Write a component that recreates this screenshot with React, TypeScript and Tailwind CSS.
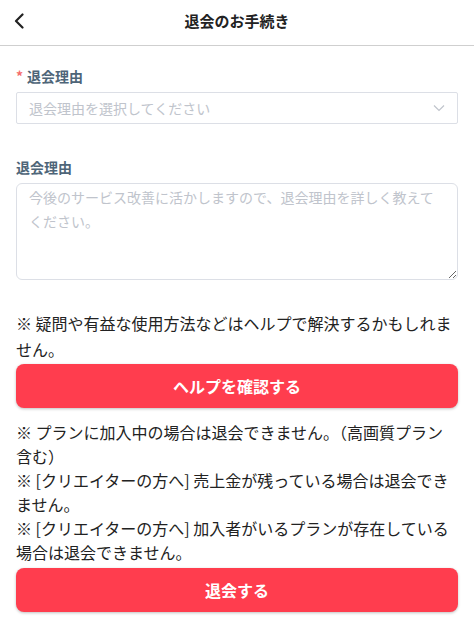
import React from "react";

const font = { fontFamily: '"Noto Sans CJK JP", "Noto Sans", sans-serif' };

export default function App() {
  return (
    <div className="w-[474px] min-h-[624px] bg-white text-[#222]" style={font}>
      <header className="relative h-[46px] border-b border-[#cfcfcf] flex items-center justify-center">
        <button className="absolute left-[12px] top-[12px] w-[14px] h-[18px] flex items-center justify-center">
          <svg width="10" height="16" viewBox="0 0 10 16" fill="none">
            <path d="M8.5 1.5 L2 8 L8.5 14.5" stroke="#222" strokeWidth="2.2" strokeLinecap="round" strokeLinejoin="round" />
          </svg>
        </button>
        <h1 className="text-[15px] font-bold leading-none -mt-[5px]">退会のお手続き</h1>
      </header>

      <main className="px-4 pt-[19px]">
        <label className="block text-[14px] font-bold leading-[22px] text-[#4e6578] mb-[5px]">
          <span className="text-[#f56c6c] mr-[4px]">*</span>退会理由
        </label>
        <div className="h-[32px] border border-[#dcdfe6] rounded-[2px] flex items-center justify-between pl-[12px] pr-[12px]">
          <span className="text-[14px] text-[#c0c4cc]">退会理由を選択してください</span>
          <svg width="12" height="8" viewBox="0 0 12 8" fill="none">
            <path d="M1 1.5 L6 6.5 L11 1.5" stroke="#c0c4cc" strokeWidth="1.2" />
          </svg>
        </div>

        <label className="block text-[14px] font-bold leading-[22px] text-[#4e6578] mt-[32px] mb-[5px]">
          退会理由
        </label>
        <textarea
          className="block w-full h-[97px] border border-[#dcdfe6] rounded-[6px] px-[12px] pt-[1px] text-[14px] leading-[24px] placeholder:text-[#c0c4cc] outline-none"
          placeholder="今後のサービス改善に活かしますので、退会理由を詳しく教えてください。"
        />

        <p className="mt-[31px] text-[16px] leading-[25.6px]">
          ※ 疑問や有益な使用方法などはヘルプで解決するかもしれません。
        </p>
        <button className="mt-[2px] w-full h-[44px] rounded-[8px] bg-[#ff3d4e] text-white text-[16px] font-bold shadow-[0_1px_3px_rgba(0,0,0,0.25)]">
          ヘルプを確認する
        </button>

        <p className="mt-[12px] text-[16px] leading-[24px]">
          ※ プランに加入中の場合は退会できません。（高画質プラン含む）
          <br />
          ※ [クリエイターの方へ] 売上金が残っている場合は退会できません。
          <br />
          ※ [クリエイターの方へ] 加入者がいるプランが存在している場合は退会できません。
        </p>
        <button className="mt-[4px] w-full h-[44px] rounded-[8px] bg-[#ff3d4e] text-white text-[16px] font-bold shadow-[0_1px_3px_rgba(0,0,0,0.25)]">
          退会する
        </button>
      </main>
    </div>
  );
}
